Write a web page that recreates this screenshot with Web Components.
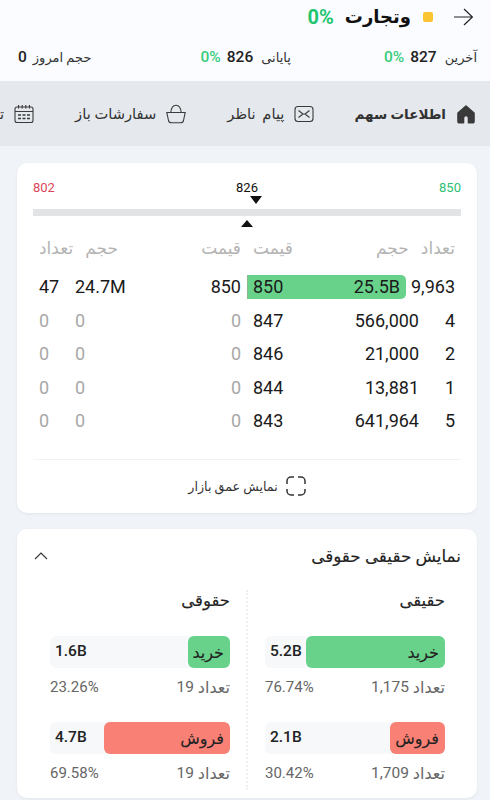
<!DOCTYPE html>
<html lang="fa" dir="rtl">
<head>
<meta charset="utf-8">
<title>وتجارت</title>
<style>
  html, body { margin: 0; height: 800px; overflow: hidden; background: #f0f4f8; }
  body { font-family: Roboto, "DejaVu Sans", sans-serif; color: #1c1c1c; }
</style>
</head>
<body>
<stock-header name="وتجارت" change="0%"></stock-header>
<stat-bar>
  <stat-item label="آخرین" value="827" change="0%"></stat-item>
  <stat-item label="پایانی" value="826" change="0%" style="margin-left:16px"></stat-item>
  <stat-item label="حجم امروز" value="0"></stat-item>
</stat-bar>
<tab-bar>
  <tab-item icon="home" active style="margin-left:-1px">اطلاعات سهم</tab-item>
  <tab-item icon="mail" style="word-spacing:3px">پیام ناظر</tab-item>
  <tab-item icon="basket">سفارشات باز</tab-item>
  <tab-item icon="calendar">تاریخچه</tab-item>
</tab-bar>
<main-stack>
  <order-card></order-card>
  <holders-card></holders-card>
</main-stack>

<script>
const ICONS = {
  home: '<path d="M10 2 2 9v8.500A1.200 1.200 0 0 0 3.200 18.700H7.500V14a2.500 2.500 0 0 1 5 0v4.700h4.300A1.200 1.200 0 0 0 18 17.500V9z" fill="#3a3a3a" stroke="#3a3a3a" stroke-width="1.600" stroke-linejoin="round"/>',
  mail: '<rect x="1" y="2.500" width="18" height="15" rx="3" fill="none" stroke="#3a3a3a" stroke-width="1.100"/><path d="M4.500 6.500 9 10l-4.500 3.500M15.500 6.500 11 10l4.500 3.500M9 10h2" fill="none" stroke="#3a3a3a" stroke-width="1.100"/>',
  basket: '<path d="M.8 8.500h18.400l-1.700 8a3 3 0 0 1-2.900 2.300H5.400a3 3 0 0 1-2.900-2.300zM4.800 8.500C5.200 4 7 1.300 10 1.300S14.800 4 15.200 8.500" fill="none" stroke="#3a3a3a" stroke-width="1.100"/>',
  calendar: '<rect x="1" y="3" width="18" height="15.500" rx="2" fill="none" stroke="#3a3a3a" stroke-width="1.100"/><path d="M1 7.500h18M4.500 1v3.500M8.200 1v3.500M11.800 1v3.500M15.500 1v3.500" fill="none" stroke="#3a3a3a" stroke-width="1.100"/><path d="M4 11h3M8.500 11h3M13 11h3M4 14.500h3M8.500 14.500h3M13 14.500h3" fill="none" stroke="#3a3a3a" stroke-width="1.300"/>'
};

class StockHeader extends HTMLElement {
  connectedCallback() {
    this.attachShadow({mode: 'open'}).innerHTML = `
      <style>
        :host { display: flex; align-items: center; height: 33px; padding: 0 17px 0 0; background: #fbfcff; }
        svg { width: 19px; height: 18px; }
        .dot { width: 10px; height: 10px; border-radius: 2px; background: #fbc531; margin: 0 21px 0 12px; }
        .name { font-size: 18px; font-weight: 700; color: #111; }
        .chg { font-size: 20px; font-weight: 700; color: #22c56f; direction: ltr; margin-right: 11px; }
      </style>
      <svg viewBox="0 0 19 18"><path d="M0 9h18.500M10 1l8.500 8-8.500 8" fill="none" stroke="#222" stroke-width="1.200"/></svg>
      <span class="dot"></span>
      <span class="name">${this.getAttribute('name')}</span>
      <span class="chg">${this.getAttribute('change')}</span>`;
  }
}

class StatBar extends HTMLElement {
  connectedCallback() {
    this.attachShadow({mode: 'open'}).innerHTML = `
      <style>
        :host { display: flex; justify-content: space-between; align-items: center; height: 48px; padding: 0 13px 0 18px; background: #fbfcff; }
      </style>
      <slot></slot>`;
  }
}

class StatItem extends HTMLElement {
  connectedCallback() {
    const change = this.getAttribute('change');
    this.attachShadow({mode: 'open'}).innerHTML = `
      <style>
        :host { display: flex; align-items: center; gap: 6px; }
        .l { font-size: 13px; color: #333; margin-left: ${change ? 2 : 0}px; }
        .v { font-size: 15.500px; font-weight: 500; color: #222; }
        .c { font-size: 15.500px; font-weight: 500; color: #36cc7c; direction: ltr; }
      </style>
      <span class="l">${this.getAttribute('label')}</span>
      <span class="v">${this.getAttribute('value')}</span>
      ${change ? `<span class="c">${change}</span>` : ''}`;
  }
}

class TabBar extends HTMLElement {
  connectedCallback() {
    this.attachShadow({mode: 'open'}).innerHTML = `
      <style>
        :host { display: flex; align-items: center; gap: 41px; height: 65px; padding-right: 14px; background: #e5e9ed; overflow: hidden; white-space: nowrap; }
      </style>
      <slot></slot>`;
  }
}

class TabItem extends HTMLElement {
  connectedCallback() {
    const active = this.hasAttribute('active');
    this.attachShadow({mode: 'open'}).innerHTML = `
      <style>
        :host { display: flex; flex: none; align-items: center; gap: 10px; font-size: ${active ? 13.5 : 14.7}px; color: #333; font-weight: ${active ? 700 : 400}; }
        svg { width: 20px; height: 20px; flex: none; }
      </style>
      <svg viewBox="0 0 20 20">${ICONS[this.getAttribute('icon')]}</svg>
      <slot></slot>`;
  }
}

class MainStack extends HTMLElement {
  connectedCallback() {
    this.attachShadow({mode: 'open'}).innerHTML = `
      <style>
        :host { display: flex; flex-direction: column; gap: 16px; padding: 17px 13px 0 17px; }
      </style>
      <slot></slot>`;
  }
}

class PriceRange extends HTMLElement {
  connectedCallback() {
    this.attachShadow({mode: 'open'}).innerHTML = `
      <style>
        :host { display: block; direction: ltr; }
        .labels { display: flex; justify-content: space-between; align-items: center; height: 18px; font-size: 13px; }
        .low { color: #d9465b; } .high { color: #2cc173; } .now { color: #111; }
        .tri { width: 0; height: 0; border-left: 6.500px solid transparent; border-right: 6.500px solid transparent; }
        .down { border-top: 8px solid #111; margin: 0 0 5px 217px; }
        .up { border-bottom: 7px solid #111; margin: 4px 0 0 208px; }
        .bar { height: 7px; background: #e2e3e5; }
      </style>
      <div class="labels"><span class="low">802</span><span class="now">826</span><span class="high">850</span></div>
      <div class="tri down"></div>
      <div class="bar"></div>
      <div class="tri up"></div>`;
  }
}

class BookHead extends HTMLElement {
  connectedCallback() {
    this.attachShadow({mode: 'open'}).innerHTML = `
      <style>
        :host { display: grid; grid-template-columns: 1fr 1fr; direction: ltr; align-items: center; height: 21px; margin: 10px 0 12px; color: #b3b3b3; font-size: 17px; }
        .s { display: flex; direction: rtl; justify-content: space-between; }
        .b { padding-right: 6px; padding-left: 6px; }
        .a { padding-left: 6px; padding-right: 6px; }
        .g { display: flex; gap: 12px; }
      </style>
      <div class="s a"><span>قیمت</span><div class="g"><span>حجم</span><span>تعداد</span></div></div>
      <div class="s b"><div class="g"><span>تعداد</span><span>حجم</span></div><span>قیمت</span></div>`;
  }
}

class BookRow extends HTMLElement {
  connectedCallback() {
    const [aCount, aVol, aPrice, bPrice, bVol, bCount] = this.getAttribute('cells').split('|');
    const top = this.hasAttribute('top');
    const dim = aCount === '0';
    this.attachShadow({mode: 'open'}).innerHTML = `
      <style>
        :host { display: grid; grid-template-columns: 1fr 1fr; direction: ltr; align-items: center; height: 33.500px; font-size: 18px; color: #1a1a1a; }
        .ask, .bid { display: flex; align-items: center; height: 24px; }
        .ask { padding-left: 6px; padding-right: 6px; ${dim ? 'color: #a8a8a8;' : ''} }
        .ask .cnt { width: 36px; }
        .ask .pr { margin-left: auto; }
        .bid { padding-right: 6px; }
        .body { flex: 1; display: flex; justify-content: space-between; align-items: center; height: 24px; padding: 0 6px; }
        .bid .cnt { ${top ? 'margin-left: 5px;' : 'width: 36px; text-align: right;'} }
        .body.top { background: #68d28b; border-radius: 0 5px 5px 0; border-left: 1px solid #8fb78f; padding-left: 5px; }
        .body.rest { padding-right: 0; }
      </style>
      <div class="ask"><span class="cnt">${aCount}</span><span>${aVol}</span><span class="pr">${aPrice}</span></div>
      <div class="bid">
        <div class="body ${top ? 'top' : 'rest'}"><span>${bPrice}</span><span>${bVol}</span></div>
        <span class="cnt">${bCount}</span>
      </div>`;
  }
}

class OrderCard extends HTMLElement {
  connectedCallback() {
    this.attachShadow({mode: 'open'}).innerHTML = `
      <style>
        :host { display: block; height: 350px; box-sizing: border-box; padding: 15px 16px 0; background: #fff; border-radius: 10px; box-shadow: 0 1px 3px rgba(60,70,90,.08); }
        .foot { display: flex; align-items: center; justify-content: center; gap: 8px; height: 53px; margin-top: 21px; border-top: 1px solid #f1f2f3; font-size: 12.700px; color: #333; }
        svg { width: 20px; height: 20px; }
      </style>
      <price-range></price-range>
      <book-head></book-head>
      <book-row top cells="47|24.7M|850|850|25.5B|9,963"></book-row>
      <book-row cells="0|0|0|847|566,000|4"></book-row>
      <book-row cells="0|0|0|846|21,000|2"></book-row>
      <book-row cells="0|0|0|844|13,881|1"></book-row>
      <book-row cells="0|0|0|843|641,964|5"></book-row>
      <div class="foot">
        <svg viewBox="0 0 20 20"><path d="M1 8V5a4 4 0 0 1 4-4h3M12 1h3a4 4 0 0 1 4 4v3M19 13v2a4 4 0 0 1-4 4h-3M8 19H5a4 4 0 0 1-4-4v-2" fill="none" stroke="#333" stroke-width="1.500"/></svg>
        <span>نمایش عمق بازار</span>
      </div>`;
  }
}

class FlowBar extends HTMLElement {
  connectedCallback() {
    const kind = this.getAttribute('kind');
    const colour = kind === 'خرید' ? '#68d28b' : '#f98075';
    this.attachShadow({mode: 'open'}).innerHTML = `
      <style>
        :host { display: block; }
        .track { display: flex; justify-content: space-between; align-items: center; height: 32px; background: #f6f8fa; border-radius: 6px; }
        .fill { box-sizing: border-box; display: flex; align-items: center; height: 32px; padding: 0 6px; border-radius: 6px; background: ${colour}; width: ${this.getAttribute('fill')}px; font-size: 16px; color: #222; -webkit-text-stroke: .12px #222; white-space: nowrap; }
        .val { padding: 0 0 3px 5px; direction: ltr; font-size: 15.500px; font-weight: 500; color: #222; }
        .meta { display: flex; justify-content: space-between; align-items: center; margin-top: 9px; height: 20px; font-size: 15.500px; color: #666; }
        .pct { direction: ltr; font-size: 15px; }
        .n { display: flex; gap: 4px; align-items: center; }
        .w { font-size: 16px; }
      </style>
      <div class="track"><div class="fill">${kind}</div><span class="val">${this.getAttribute('value')}</span></div>
      <div class="meta"><span class="n"><span class="w">تعداد</span><span>${this.getAttribute('count')}</span></span><span class="pct">${this.getAttribute('pct')}</span></div>`;
  }
}

class HoldersCard extends HTMLElement {
  connectedCallback() {
    this.attachShadow({mode: 'open'}).innerHTML = `
      <style>
        :host { display: block; height: 269px; box-sizing: border-box; padding: 16px 16px 0; background: #fff; border-radius: 10px; box-shadow: 0 1px 3px rgba(60,70,90,.08); }
        .title { display: flex; justify-content: space-between; align-items: center; height: 22px; font-size: 16.800px; color: #222; -webkit-text-stroke: .15px #222; }
        svg { width: 14px; height: 8px; margin-left: 1px; }
        .cols { display: grid; grid-template-columns: 1fr 1fr; margin-top: 23px; }
        .col { display: flex; flex-direction: column; height: 200px; box-sizing: border-box; }
        .r { padding: 0 16px 0 17px; border-left: 2px dotted #eceef0; margin-left: -1px; }
        .l { margin: 0 17px; }
        h3 { margin: 0 0 24px; height: 22px; font-size: 16.500px; font-weight: 400; color: #222; line-height: 22px; -webkit-text-stroke: .15px #222; }
        flow-bar + flow-bar { margin-top: 25px; }
      </style>
      <div class="title"><span>نمایش حقیقی حقوقی</span>
        <svg viewBox="0 0 14 8"><path d="M1 7l6-6 6 6" fill="none" stroke="#333" stroke-width="1.100"/></svg></div>
      <div class="cols">
        <div class="col r">
          <h3>حقیقی</h3>
          <flow-bar kind="خرید" fill="139" value="5.2B" count="1,175" pct="76.74%"></flow-bar>
          <flow-bar kind="فروش" fill="55" value="2.1B" count="1,709" pct="30.42%"></flow-bar>
        </div>
        <div class="col l">
          <h3>حقوقی</h3>
          <flow-bar kind="خرید" fill="42" value="1.6B" count="19" pct="23.26%"></flow-bar>
          <flow-bar kind="فروش" fill="126" value="4.7B" count="19" pct="69.58%"></flow-bar>
        </div>
      </div>`;
  }
}

customElements.define('stock-header', StockHeader);
customElements.define('stat-bar', StatBar);
customElements.define('stat-item', StatItem);
customElements.define('tab-bar', TabBar);
customElements.define('tab-item', TabItem);
customElements.define('main-stack', MainStack);
customElements.define('price-range', PriceRange);
customElements.define('book-head', BookHead);
customElements.define('book-row', BookRow);
customElements.define('order-card', OrderCard);
customElements.define('flow-bar', FlowBar);
customElements.define('holders-card', HoldersCard);
</script>
</body>
</html>
